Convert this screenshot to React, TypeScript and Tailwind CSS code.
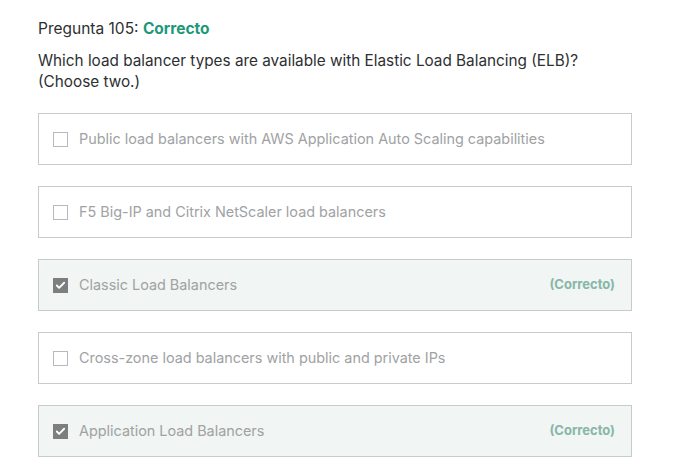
import { Check } from "lucide-react";

const answers = [
  { text: "Public load balancers with AWS Application Auto Scaling capabilities", correct: false },
  { text: "F5 Big-IP and Citrix NetScaler load balancers", correct: false },
  { text: "Classic Load Balancers", correct: true },
  { text: "Cross-zone load balancers with public and private IPs", correct: false },
  { text: "Application Load Balancers", correct: true },
];

export default function App() {
  return (
    <div
      className="min-h-[466px] w-[693px] bg-white px-[38px] pt-[18px] text-[#2d2f31]"
      style={{ fontFamily: "Inter, 'Liberation Sans', sans-serif" }}
    >
      <div className="text-[15.5px] leading-[22px]">
        Pregunta 105: <span className="font-bold text-[#1c9879]">Correcto</span>
      </div>
      <p className="mt-[10px] text-[15.3px] leading-[21px]">
        Which load balancer types are available with Elastic Load Balancing (ELB)?
        <br />
        (Choose two.)
      </p>
      <ul className="mt-[21px] flex w-[594px] flex-col gap-[21px]">
        {answers.map((a) => (
          <li
            key={a.text}
            className={`flex h-[52px] items-center border border-[#c9cacb] pl-[14px] pr-[16px] ${
              a.correct ? "bg-[#f1f5f3]" : "bg-white"
            }`}
          >
            {a.correct ? (
              <span className="flex h-[15px] w-[15px] items-center justify-center bg-[#7d7e80]">
                <Check size={11} strokeWidth={4} className="text-white" />
              </span>
            ) : (
              <span className="h-[15px] w-[15px] border border-[#b8b9ba] bg-white" />
            )}
            <span className="ml-[11px] flex-1 text-[14.4px] text-[#a0a2a4]">{a.text}</span>
            {a.correct && (
              <span className="text-[13px] font-bold text-[#87b7a8]">(Correcto)</span>
            )}
          </li>
        ))}
      </ul>
    </div>
  );
}
